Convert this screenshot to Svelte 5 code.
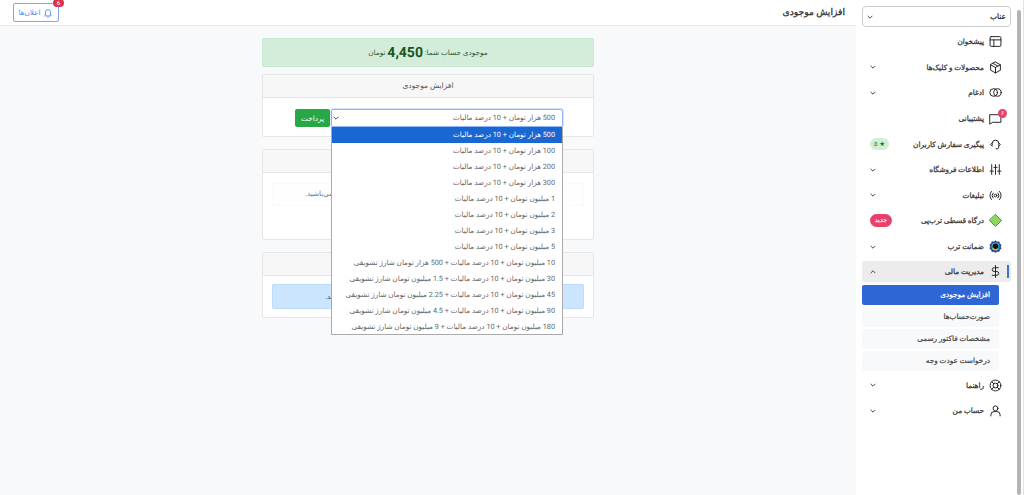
<script>
  const options = [
    '500 هزار تومان + 10 درصد مالیات',
    '100 هزار تومان + 10 درصد مالیات',
    '200 هزار تومان + 10 درصد مالیات',
    '300 هزار تومان + 10 درصد مالیات',
    '1 میلیون تومان + 10 درصد مالیات',
    '2 میلیون تومان + 10 درصد مالیات',
    '3 میلیون تومان + 10 درصد مالیات',
    '5 میلیون تومان + 10 درصد مالیات',
    '10 میلیون تومان + 10 درصد مالیات + 500 هزار تومان شارژ تشویقی',
    '30 میلیون تومان + 10 درصد مالیات + 1.5 میلیون تومان شارژ تشویقی',
    '45 میلیون تومان + 10 درصد مالیات + 2.25 میلیون تومان شارژ تشویقی',
    '90 میلیون تومان + 10 درصد مالیات + 4.5 میلیون تومان شارژ تشویقی',
    '180 میلیون تومان + 10 درصد مالیات + 9 میلیون تومان شارژ تشویقی'
  ];

  const menu = [
    { label: 'پیشخوان', icon: 'layout' },
    { label: 'محصولات و کلیک‌ها', icon: 'box', chevron: true },
    { label: 'ادغام', icon: 'rings', chevron: true },
    { label: 'پشتیبانی', icon: 'chat', dot: '۶' },
    { label: 'پیگیری سفارش کاربران', icon: 'headset', pill: '★ ۵' },
    { label: 'اطلاعات فروشگاه', icon: 'sliders', chevron: true },
    { label: 'تبلیغات', icon: 'broadcast', chevron: true },
    { label: 'درگاه قسطی ترب‌پی', icon: 'diamond', isNew: true },
    { label: 'ضمانت ترب', icon: 'badge', chevron: true }
  ];

  const submenu = ['افزایش موجودی', 'صورت‌حساب‌ها', 'مشخصات فاکتور رسمی', 'درخواست عودت وجه'];
</script>

{#snippet chevron(up = false)}
  <svg class="chev" viewBox="0 0 10 6" width="6" height="4"><path d={up ? 'M1 5l4-4 4 4' : 'M1 1l4 4 4-4'} fill="none" stroke="#444" stroke-width="1.6" /></svg>
{/snippet}

{#snippet icon(name)}
  <svg class="ico" viewBox="0 0 24 24" width="13" height="13" fill="none" stroke="#222" stroke-width="1.8" stroke-linecap="round" stroke-linejoin="round">
    {#if name === 'layout'}
      <rect x="2" y="3" width="20" height="18" rx="2" /><path d="M2 9h20M9 9v12" />
    {:else if name === 'box'}
      <path d="M12 2l9 5v10l-9 5-9-5V7z" /><path d="M3 7l9 5 9-5M12 12v10M7.5 4.5l9 5" />
    {:else if name === 'rings'}
      <circle cx="8.5" cy="12" r="7" /><circle cx="15.5" cy="12" r="7" />
    {:else if name === 'chat'}
      <path d="M2 5h20v14H7l-5 3z" />
    {:else if name === 'headset'}
      <path d="M6 13V10a6 6 0 0 1 12 0v3" /><path d="M6 9l-3 3 3 3M18 9l3 3-3 3" /><path d="M18 15v2a3 3 0 0 1-3 3h-2" />
    {:else if name === 'sliders'}
      <path d="M5 3v18M12 3v18M19 3v18M2 15h6M9 8h6M16 15h6" />
    {:else if name === 'broadcast'}
      <circle cx="12" cy="12" r="2.5" /><path d="M7.5 7.5a6.5 6.5 0 0 0 0 9M16.5 7.5a6.5 6.5 0 0 1 0 9M4.5 4.5a11 11 0 0 0 0 15M19.5 4.5a11 11 0 0 1 0 15" />
    {:else if name === 'diamond'}
      <path d="M12 1l11 11-11 11L1 12z" fill="#8ed65f" stroke="#3f9a2f" />
    {:else if name === 'badge'}
      <path d="M12 1.500l3 2 3.600-.2 1 3.500 2.900 2.200-1.200 3.400 1.200 3.400-2.900 2-1 3.500-3.600-.2-3 2-3-2-3.600.2-1-3.500-2.900-2 1.200-3.400L1.500 8.800l2.900-2.200 1-3.500L9 3.500z" fill="#2a3a8c" stroke="#2a3a8c" stroke-width="1" /><circle cx="12" cy="12" r="6.500" fill="#111" stroke="#35c4d8" stroke-width="2" /><path d="M7 15a6.500 6.500 0 0 0 9 1.500" stroke="#e8c52a" stroke-width="2" />
    {:else if name === 'dollar'}
      <path d="M12 1v22M17 5H9.500a3.500 3.500 0 0 0 0 7h5a3.500 3.500 0 0 1 0 7H6" />
    {:else if name === 'lifebuoy'}
      <circle cx="12" cy="12" r="10" /><circle cx="12" cy="12" r="4.500" /><path d="M5 5l4 4M19 5l-4 4M5 19l4-4M19 19l-4-4" />
    {:else if name === 'user'}
      <circle cx="12" cy="8" r="4.500" /><path d="M3.500 22v-2a6 6 0 0 1 6-6h5a6 6 0 0 1 6 6v2" />
    {/if}
  </svg>
{/snippet}

<div class="page">
  <aside class="sidebar" dir="rtl">
    <div class="shop-select"><span>عناب</span>{@render chevron()}</div>
    <nav>
      {#each menu as item}
        <div class="item">
          <span class="ico-wrap">
            {@render icon(item.icon)}
            {#if item.dot}<span class="dot">{item.dot}</span>{/if}
          </span>
          <span class="label">{item.label}</span>
          {#if item.chevron}{@render chevron()}{/if}
          {#if item.pill}<span class="pill">{item.pill}</span>{/if}
          {#if item.isNew}<span class="new">جدید</span>{/if}
        </div>
      {/each}
      <div class="item open">
        <span class="ico-wrap">{@render icon('dollar')}</span>
        <span class="label">مدیریت مالی</span>
        {@render chevron(true)}
      </div>
      <div class="sub">
        {#each submenu as s, i}
          <div class="sub-item" class:active={i === 0}>{s}</div>
        {/each}
      </div>
      <div class="item">
        <span class="ico-wrap">{@render icon('lifebuoy')}</span>
        <span class="label">راهنما</span>
        {@render chevron()}
      </div>
      <div class="item">
        <span class="ico-wrap">{@render icon('user')}</span>
        <span class="label">حساب من</span>
        {@render chevron()}
      </div>
    </nav>
    <div class="scrollbar"></div>
  </aside>

  <main>
    <header dir="rtl">
      <h1>افزایش موجودی</h1>
      <button class="notif">
        <span class="badge">6</span>
        <svg viewBox="0 0 24 24" width="10" height="10" fill="none" stroke="#4a86e8" stroke-width="2"><path d="M6 17V10a6 6 0 0 1 12 0v7l2 2H4zM10 22h4" /></svg>
        اعلان‌ها
      </button>
    </header>

    <div class="content" dir="rtl">
      <div class="balance">
        موجودی حساب شما: <b>4,450</b> تومان
      </div>

      <section class="card first">
        <div class="card-head">افزایش موجودی</div>
        <div class="card-body pay">
          <div class="select-wrap">
            <div class="select"><span>{options[0]}</span>{@render chevron()}</div>
            <ul class="dropdown">
              {#each options as o, i}
                <li class:sel={i === 0}>{o}</li>
              {/each}
            </ul>
          </div>
          <button class="pay-btn">پرداخت</button>
        </div>
      </section>

      <section class="card second">
        <div class="card-head"></div>
        <div class="card-body">
          <div class="note">شما در حال حاضر دارای پرداخت فعالی نمی‌باشید.</div>
        </div>
      </section>

      <section class="card third">
        <div class="card-head"></div>
        <div class="card-body">
          <div class="info">شما هنوز هیچ تراکنشی انجام نداده‌اید.</div>
        </div>
      </section>
    </div>
  </main>
</div>

<style>
  :global(body) {
    margin: 0;
    overflow: hidden;
    background: #fff;
  }

  .page {
    display: flex;
    flex-direction: row-reverse;
    width: 1024px;
    height: 495px;
    font-family: "Roboto", "DejaVu Sans", sans-serif;
    text-rendering: geometricPrecision;
    color: #555;
    font-size: 7.25px;
  }

  /* sidebar */
  .sidebar {
    position: relative;
    width: 168px;
    flex: none;
    box-sizing: border-box;
    border-right: 1px solid #e4e4e4;
    padding: 6px 12px 0 6px;
    background: #fff;
  }

  .scrollbar {
    position: absolute;
    top: 10px;
    right: 2px;
    width: 4px;
    height: 485px;
    background: #b4b4b4;
    border-radius: 2px;
  }

  .shop-select {
    display: flex;
    justify-content: space-between;
    align-items: center;
    box-sizing: border-box;
    height: 21px;
    padding: 0 4px 0 4px;
    border: 1px solid #ccc;
    border-radius: 4px;
    font-size: 7.5px;
    color: #222;
    -webkit-text-stroke: 0.2px #222;
  }

  nav {
    margin-top: 2px;
  }

  .item {
    display: flex;
    align-items: center;
    height: 25.6px;
    padding: 0 9px 0 8px;
    color: #333;
    font-size: 7.3px;
    -webkit-text-stroke: 0.25px #333;
  }

  .item .chev,
  .item .pill,
  .item .new {
    margin-right: auto;
  }

  .ico-wrap {
    position: relative;
    display: flex;
    width: 13px;
    height: 13px;
    margin-left: 5px;
  }

  .dot {
    position: absolute;
    top: -3px;
    left: 9px;
    width: 9px;
    height: 9px;
    border-radius: 50%;
    background: #e8416b;
    color: #fff;
    -webkit-text-stroke: 0;
    font-size: 6px;
    line-height: 9px;
    text-align: center;
  }

  .pill {
    background: #d2efd4;
    color: #1f7a33;
    -webkit-text-stroke: 0;
    border-radius: 6px;
    width: 19px;
    height: 12px;
    line-height: 12px;
    font-size: 6.5px;
    text-align: center;
    white-space: nowrap;
  }

  .new {
    background: #e8416b;
    color: #fff;
    -webkit-text-stroke: 0.15px #fff;
    border-radius: 7px;
    width: 22px;
    height: 13px;
    line-height: 13px;
    font-size: 6.5px;
    text-align: center;
  }

  .open {
    position: relative;
    background: #ececef;
    border-radius: 2px;
    height: 21px;
    margin-top: 2px;
  }

  .open::before {
    content: "";
    position: absolute;
    right: 2px;
    top: 4px;
    bottom: 4px;
    width: 2px;
    background: #3b6fd6;
  }

  .sub {
    display: flex;
    flex-direction: column;
    gap: 2px;
    margin: 3px 0 1px;
  }

  .sub-item {
    height: 20px;
    line-height: 20px;
    padding: 0 9px;
    margin-right: 12px;
    background: #f8f9fb;
    border-radius: 2px;
    font-size: 7.3px;
    color: #444;
    -webkit-text-stroke: 0.2px #444;
  }

  .sub-item.active {
    background: #2f66d6;
    color: #fff;
    -webkit-text-stroke: 0.25px #fff;
  }

  /* main */
  main {
    flex: 1;
    background: #f8f9fb;
  }

  header {
    display: flex;
    justify-content: space-between;
    align-items: center;
    height: 25px;
    padding: 0 11px 0 0;
    background: #fff;
    border-bottom: 1px solid #e6e6e6;
  }

  h1 {
    margin: 0;
    font-size: 9.2px;
    color: #333;
    font-weight: 400;
    -webkit-text-stroke: 0.3px #333;
  }

  .notif {
    position: relative;
    display: flex;
    align-items: center;
    gap: 3px;
    height: 19px;
    width: 46px;
    margin-left: 13px;
    justify-content: center;
    padding: 0;
    border: 1px solid #7fa8ea;
    border-radius: 2px;
    background: #fff;
    color: #4a86e8;
    font: inherit;
    font-size: 7.2px;
  }

  .badge {
    position: absolute;
    top: -5px;
    right: -6px;
    width: 11px;
    height: 8px;
    border-radius: 4px;
    background: #d9344f;
    color: #fff;
    font-size: 6px;
    line-height: 8px;
    text-align: center;
  }

  .content {
    width: 332px;
    margin: 12px auto 0;
  }

  .balance {
    height: 29px;
    line-height: 27px;
    background: #d4edda;
    border: 1px solid #c9e8d1;
    border-radius: 2px;
    box-sizing: border-box;
    text-align: center;
    color: #2c5e3a;
    font-size: 7.3px;
    margin-bottom: 7px;
  }

  .balance b {
    font-size: 14px;
    color: #155724;
    vertical-align: -2px;
  }

  .card {
    background: #fff;
    border: 1px solid #e6e6e6;
    border-radius: 2px;
    box-sizing: border-box;
    margin-bottom: 12px;
  }

  .first { height: 63px; }
  .second { height: 91px; }
  .third { height: 66px; }

  .card-head {
    box-sizing: border-box;
    height: 23px;
    line-height: 21px;
    background: #f7f7f7;
    border-bottom: 1px solid #e6e6e6;
    text-align: center;
    color: #555;
    font-size: 7.5px;
  }

  .pay {
    display: flex;
    padding: 11px 30px 0 0;
  }

  .select-wrap {
    position: relative;
    width: 232px;
  }

  .select {
    display: flex;
    justify-content: space-between;
    align-items: center;
    box-sizing: border-box;
    height: 18px;
    padding: 0 7px 1px 1px;
    border: 1px solid #8fb5f2;
    border-radius: 2px;
    box-shadow: 0 0 0 1px #d5e4fb;
    color: #666;
  }

  .dropdown {
    position: absolute;
    z-index: 5;
    top: 18px;
    left: 0;
    right: 0;
    margin: 0;
    padding: 0;
    list-style: none;
    background: #fff;
    border: 1px solid #aaa;
    border-top: 0;
    box-sizing: border-box;
    height: 208px;
  }

  .dropdown li {
    height: 16px;
    line-height: 16px;
    padding: 0 7px;
    color: #666;
    white-space: nowrap;
  }

  .dropdown li.sel {
    background: #1967d2;
    color: #fff;
  }

  .pay-btn {
    width: 35px;
    height: 18px;
    padding: 0;
    border: 0;
    margin-right: 1px;
    background: #28a745;
    color: #fff;
    border-radius: 2px;
    font: inherit;
  }

  .note {
    margin: 10px 9px 0;
    height: 23px;
    line-height: 20px;
    background: #fefefe;
    border: 1px solid #fafafa;
    box-sizing: border-box;
    color: #777;
    text-align: left;
    padding-left: 32px;
  }

  .info {
    margin: 8px 9px 0;
    height: 25px;
    line-height: 24px;
    box-sizing: border-box;
    background: #cce5ff;
    border: 1px solid #bcdcfc;
    border-radius: 2px;
    color: #444;
    text-align: left;
    padding-left: 52px;
  }
</style>
